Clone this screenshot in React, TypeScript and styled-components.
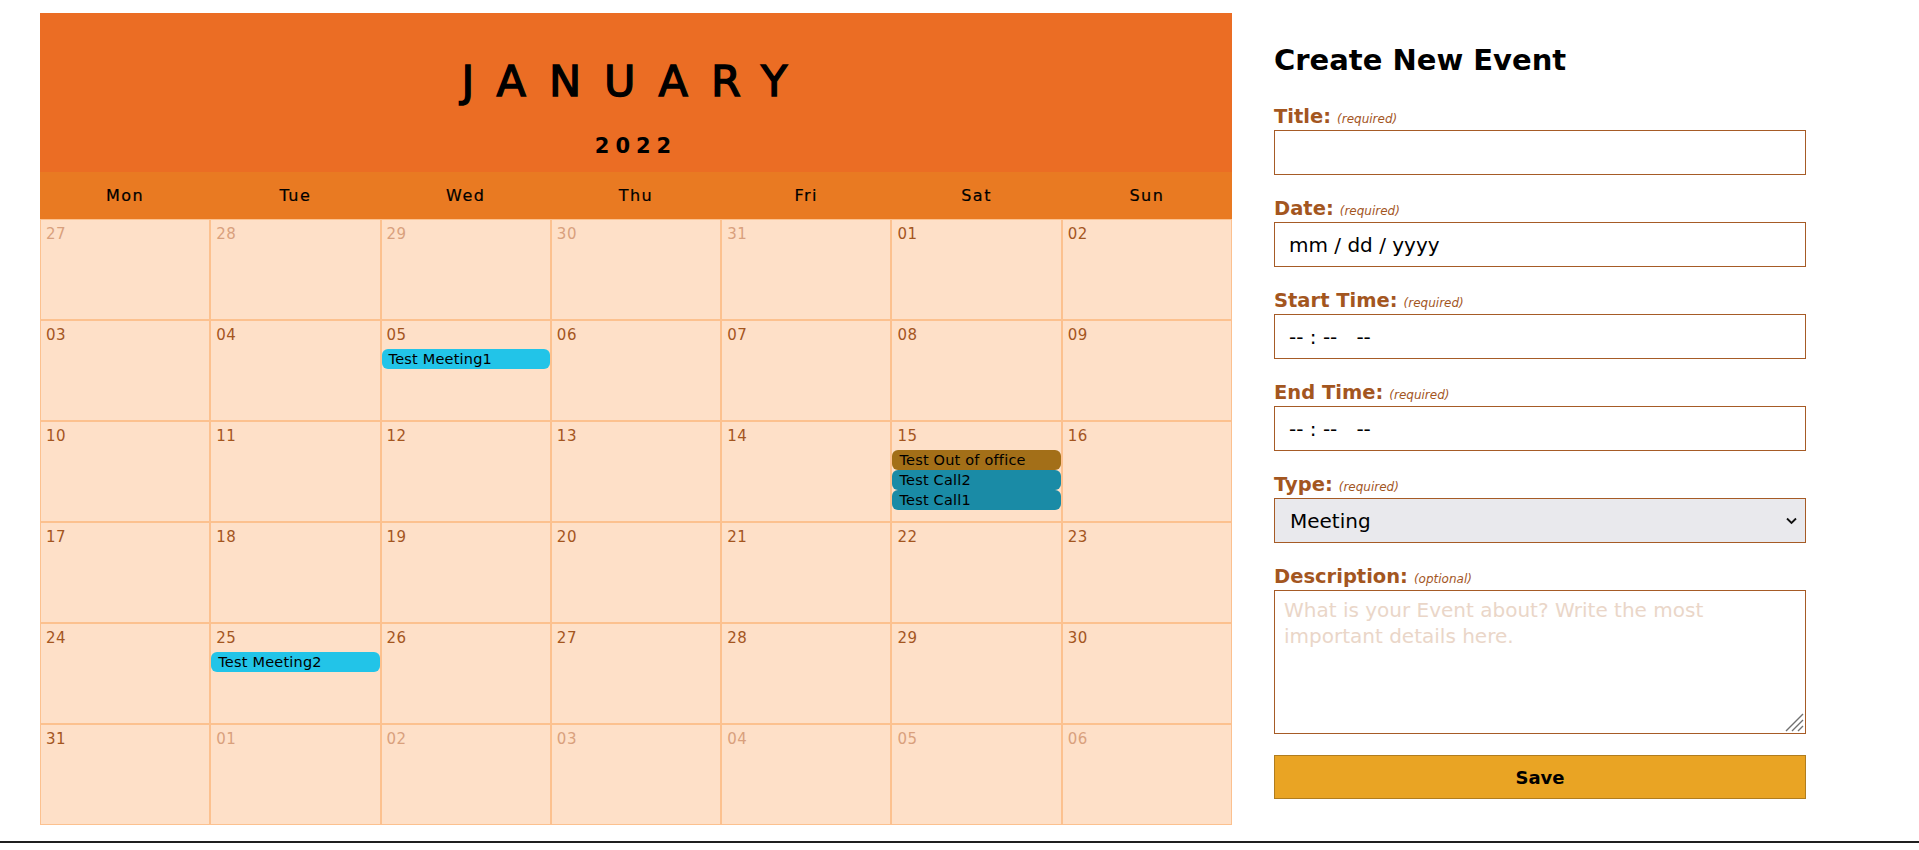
import React from "react";
import styled, { createGlobalStyle } from "styled-components";

const GlobalStyle = createGlobalStyle`
  html, body { margin: 0; padding: 0; background: #ffffff; }
  body { font-family: "DejaVu Sans", "Lucida Grande", Verdana, sans-serif; color: #000; }
  *, *::before, *::after { box-sizing: border-box; }
`;

const FONT = `"DejaVu Sans", "Lucida Grande", Verdana, sans-serif`;

const Page = styled.main`
  display: flex;
  align-items: flex-start;
  gap: 42px;
  padding: 13px 0 16px 40px;
  border-bottom: 2px solid #1f1f1f;
`;

const Calendar = styled.section`
  width: 1192px;
  flex: none;
`;

const MonthHeader = styled.header`
  height: 159px;
  background: #eb6d24;
  display: flex;
  flex-direction: column;
  align-items: center;
  padding-top: 47px;
  gap: 33px;
`;

const MonthName = styled.h2`
  margin: 0;
  font-size: 43px;
  line-height: 42px;
  font-weight: 400;
  letter-spacing: 23px;
  -webkit-text-stroke: 1.4px #000;
`;

const YearName = styled.div`
  font-size: 21px;
  line-height: 22px;
  font-weight: 700;
  letter-spacing: 6px;
`;

const WeekdayRow = styled.div`
  display: grid;
  grid-template-columns: repeat(7, 1fr);
  height: 47px;
  background: #e97a22;
`;

const Weekday = styled.div`
  display: flex;
  align-items: center;
  justify-content: center;
  font-size: 16px;
  letter-spacing: 1.5px;
  -webkit-text-stroke: 0.2px #000;
`;

const DaysGrid = styled.div`
  display: grid;
  grid-template-columns: repeat(7, 1fr);
  grid-template-rows: repeat(6, 101px);
  background: #fee0c8;
`;

const DayCell = styled.div`
  border: 1px solid #fcc18f;
  padding-top: 5px;
  display: flex;
  flex-direction: column;
  min-width: 0;
`;

const DayNumber = styled.span<{ $muted?: boolean }>`
  padding: 0 5px;
  font-size: 15px;
  line-height: 18px;
  letter-spacing: 0.5px;
  margin-bottom: 5px;
  color: ${(p) => (p.$muted ? "#d9a07d" : "#a4561f")};
`;

type Kind = "meeting" | "call" | "ooo";

const KIND_COLORS: Record<Kind, string> = {
  meeting: "#22c4e8",
  call: "#1a8ba6",
  ooo: "#a36f18",
};

const EventPill = styled.div<{ $kind: Kind }>`
  height: 20px;
  line-height: 20px;
  border-radius: 6px;
  padding-left: 7px;
  font-size: 14.5px;
  letter-spacing: 0.2px;
  color: #000;
  white-space: nowrap;
  overflow: hidden;
  background: ${(p) => KIND_COLORS[p.$kind]};
`;

const FormPanel = styled.form`
  width: 532px;
  flex: none;
  display: flex;
  flex-direction: column;
  padding-top: 30px;
`;

const Heading = styled.h1`
  margin: 0 0 26px;
  font-size: 29px;
  line-height: 34px;
  font-weight: 700;
`;

const Field = styled.div`
  display: flex;
  flex-direction: column;
  margin-bottom: 20px;
`;

const Label = styled.label`
  font-size: 19.5px;
  line-height: 27px;
  font-weight: 700;
  color: #a3561f;
`;

const Hint = styled.span`
  font-size: 12px;
  line-height: 1;
  font-style: italic;
  font-weight: 400;
  margin-left: 6px;
`;

const TextInput = styled.input`
  height: 45px;
  width: 100%;
  border: 1px solid #a65b26;
  border-radius: 0;
  background: #fff;
  padding: 0 14px;
  font-family: ${FONT};
  font-size: 20px;
  color: #000;
  outline: none;
  &::placeholder {
    color: #000;
    opacity: 1;
  }
`;

const SelectWrap = styled.div`
  position: relative;
  height: 45px;
`;

const Select = styled.select`
  appearance: none;
  -webkit-appearance: none;
  width: 100%;
  height: 45px;
  border: 1px solid #a65b26;
  border-radius: 0;
  background: #e9e9ed;
  padding: 0 30px 0 15px;
  font-family: ${FONT};
  font-size: 20px;
  color: #000;
  outline: none;
`;

const Chevron = styled.svg`
  position: absolute;
  right: 9px;
  top: 50%;
  transform: translateY(-50%);
  pointer-events: none;
`;

const AreaWrap = styled.div`
  position: relative;
  height: 144px;
`;

const TextArea = styled.textarea`
  display: block;
  width: 100%;
  height: 144px;
  border: 1px solid #a65b26;
  border-radius: 0;
  padding: 6px 9px;
  font-family: ${FONT};
  font-size: 20px;
  line-height: 26px;
  resize: none;
  outline: none;
  &::placeholder {
    color: #ead6c8;
    opacity: 1;
  }
`;

const Grip = styled.svg`
  position: absolute;
  right: 2px;
  bottom: 2px;
  pointer-events: none;
`;

const SaveButton = styled.button`
  margin-top: 1px;
  height: 44px;
  width: 100%;
  background: #e9a424;
  border: 1px solid #b07d1f;
  border-radius: 0;
  font-family: ${FONT};
  font-size: 18px;
  font-weight: 700;
  color: #000;
  cursor: pointer;
`;

type CalEvent = { title: string; kind: Kind };
type Day = { label: string; muted?: boolean; events?: CalEvent[] };

const pad = (n: number) => (n < 10 ? `0${n}` : `${n}`);

const buildDays = (): Day[] => {
  const days: Day[] = [];
  [27, 28, 29, 30, 31].forEach((d) => days.push({ label: pad(d), muted: true }));
  for (let d = 1; d <= 31; d++) days.push({ label: pad(d) });
  for (let d = 1; d <= 6; d++) days.push({ label: pad(d), muted: true });
  const events: Record<number, CalEvent[]> = {
    5: [{ title: "Test Meeting1", kind: "meeting" }],
    15: [
      { title: "Test Out of office", kind: "ooo" },
      { title: "Test Call2", kind: "call" },
      { title: "Test Call1", kind: "call" },
    ],
    25: [{ title: "Test Meeting2", kind: "meeting" }],
  };
  Object.keys(events).forEach((k) => {
    const n = Number(k);
    days[4 + n].events = events[n];
  });
  return days;
};

const WEEKDAYS = ["Mon", "Tue", "Wed", "Thu", "Fri", "Sat", "Sun"];

const FieldLabel: React.FC<{ htmlFor: string; text: string; hint: string }> = ({ htmlFor, text, hint }) => (
  <Label htmlFor={htmlFor}>
    {text}
    <Hint>({hint})</Hint>
  </Label>
);

export default function App() {
  const days = buildDays();
  return (
    <>
      <GlobalStyle />
      <Page>
        <Calendar>
          <MonthHeader>
            <MonthName>JANUARY</MonthName>
            <YearName>2022</YearName>
          </MonthHeader>
          <WeekdayRow>
            {WEEKDAYS.map((w) => (
              <Weekday key={w}>{w}</Weekday>
            ))}
          </WeekdayRow>
          <DaysGrid>
            {days.map((d, i) => (
              <DayCell key={i}>
                <DayNumber $muted={d.muted}>{d.label}</DayNumber>
                {d.events?.map((e) => (
                  <EventPill key={e.title} $kind={e.kind}>
                    {e.title}
                  </EventPill>
                ))}
              </DayCell>
            ))}
          </DaysGrid>
        </Calendar>

        <FormPanel onSubmit={(e) => e.preventDefault()}>
          <Heading>Create New Event</Heading>
          <Field>
            <FieldLabel htmlFor="title" text="Title:" hint="required" />
            <TextInput id="title" type="text" />
          </Field>
          <Field>
            <FieldLabel htmlFor="date" text="Date:" hint="required" />
            <TextInput id="date" type="text" placeholder="mm / dd / yyyy" />
          </Field>
          <Field>
            <FieldLabel htmlFor="start" text="Start Time:" hint="required" />
            <TextInput id="start" type="text" placeholder={"-- : --\u00a0\u00a0 --"} />
          </Field>
          <Field>
            <FieldLabel htmlFor="end" text="End Time:" hint="required" />
            <TextInput id="end" type="text" placeholder={"-- : --\u00a0\u00a0 --"} />
          </Field>
          <Field>
            <FieldLabel htmlFor="type" text="Type:" hint="required" />
            <SelectWrap>
              <Select id="type" defaultValue="Meeting">
                <option>Meeting</option>
                <option>Call</option>
                <option>Out of office</option>
              </Select>
              <Chevron width="11" height="7" viewBox="0 0 11 7">
                <path d="M1 1 L5.5 5.5 L10 1" fill="none" stroke="#111" strokeWidth="1.8" />
              </Chevron>
            </SelectWrap>
          </Field>
          <Field>
            <FieldLabel htmlFor="desc" text="Description:" hint="optional" />
            <AreaWrap>
              <TextArea
                id="desc"
                placeholder="What is your Event about? Write the most important details here."
              />
              <Grip width="20" height="20" viewBox="0 0 20 20">
                <path d="M19 2 L2 19 M19 8 L8 19 M19 14 L14 19" stroke="#707070" strokeWidth="1.4" fill="none" />
              </Grip>
            </AreaWrap>
          </Field>
          <SaveButton type="submit">Save</SaveButton>
        </FormPanel>
      </Page>
    </>
  );
}
